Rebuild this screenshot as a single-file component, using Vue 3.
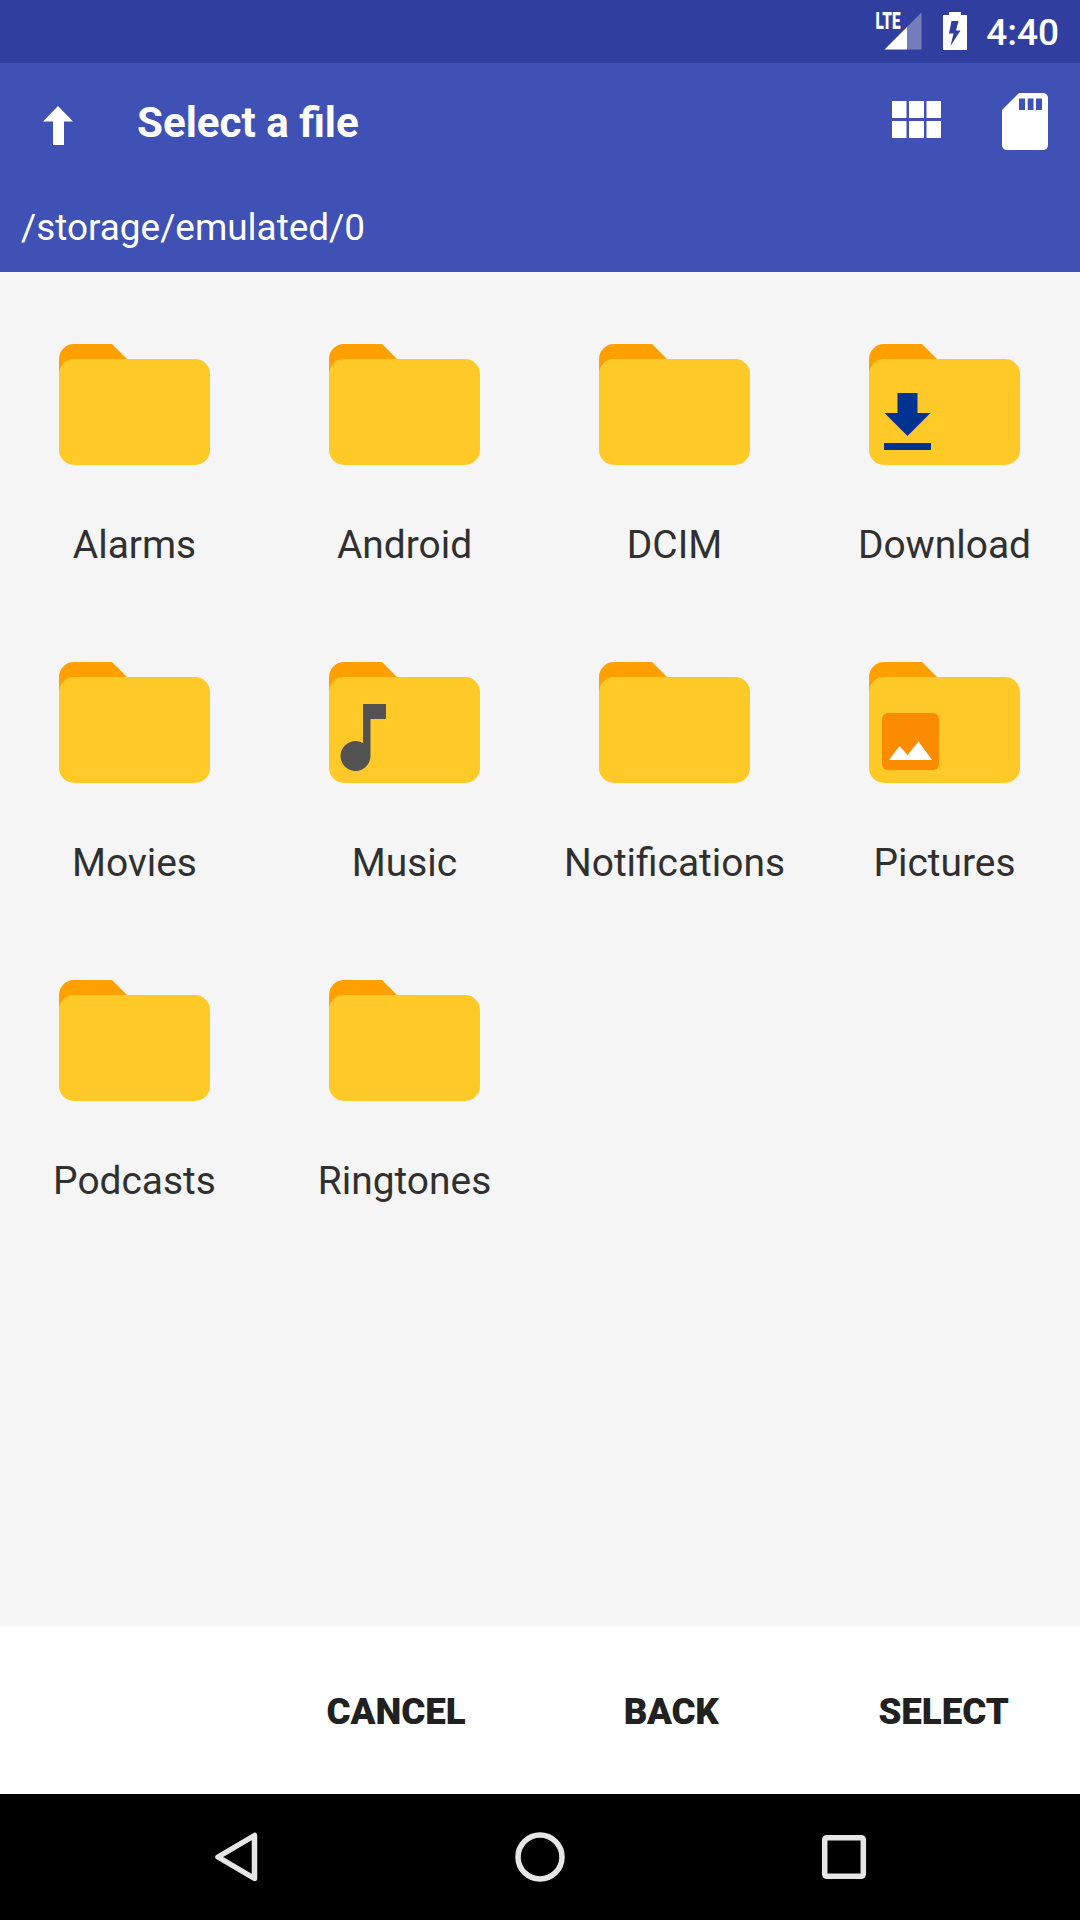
<script setup>
const folders = [
  { name: 'Alarms' },
  { name: 'Android' },
  { name: 'DCIM' },
  { name: 'Download', badge: 'download' },
  { name: 'Movies' },
  { name: 'Music', badge: 'music' },
  { name: 'Notifications' },
  { name: 'Pictures', badge: 'picture' },
  { name: 'Podcasts' },
  { name: 'Ringtones' },
]
</script>

<template>
  <div class="screen">
    <div class="status">
      <svg class="signal" width="50" height="44" viewBox="-4 -4 50 44">
        <path d="M45.500 2.500V39.500H30.500V17.500Z" fill="#757dbd" />
        <path d="M31 17V39.500H8.500Z" fill="#fff" />
        <text class="lte" x="-0.500" y="19" textLength="25" lengthAdjust="spacingAndGlyphs">LTE</text>
      </svg>
      <svg class="battery" width="24" height="38" viewBox="0 0 24 38">
        <path fill="#fff" fill-rule="evenodd" d="M6 0H18V3H24V38H0V3H6ZM8.500 9L6 21.500H10.500L7.500 34L17.500 18.500H13L15.500 9Z" />
      </svg>
      <span class="time">4:40</span>
    </div>

    <header class="appbar">
      <div class="toolbar">
        <svg class="up" width="30" height="39" viewBox="0 0 30 39">
          <path fill="#fff" d="M15 0L30 15.500H21V39H10V15.500H0Z" />
        </svg>
        <h1 class="title">Select a file</h1>
        <svg class="grid-icon" width="49" height="37" viewBox="0 0 49 37">
          <path fill="#fff" d="M0 0H14.500V17H0ZM17 0H32V17H17ZM34.500 0H49V17H34.500ZM0 20H14.500V37H0ZM17 20H32V37H17ZM34.500 20H49V37H34.500Z" />
        </svg>
        <svg class="sd" width="46" height="57" viewBox="0 0 46 57">
          <path fill="#fff" fill-rule="evenodd" d="M17 0H40.500Q46 0 46 5.500V51.500Q46 57 40.500 57H5.500Q0 57 0 51.500V17ZM17 5.500V17H23V5.500ZM25.700 5.500V17H31.500V5.500ZM34 5.500V17H40V5.500Z" />
        </svg>
      </div>
      <div class="path">/storage/emulated/0</div>
    </header>

    <main class="grid">
      <div v-for="f in folders" :key="f.name" class="cell">
        <svg class="folder" width="151" height="121" viewBox="0 0 151 121">
          <path fill="#ffa000" d="M15 0H53L69 16V30H0V15A15 15 0 0 1 15 0Z" />
          <rect y="15" width="151" height="106" rx="15" fill="#ffca28" />
          <g v-if="f.badge === 'download'" fill="#00328f">
            <path d="M28.500 49H48.500V69H61.500L38.500 92L15.500 69H28.500Z" />
            <rect x="15" y="99" width="47" height="7" />
          </g>
          <g v-else-if="f.badge === 'music'" fill="#525252">
            <path d="M34 42H57V57H41.500V94A15 15 0 1 1 34 81Z" />
          </g>
          <g v-else-if="f.badge === 'picture'">
            <rect x="13" y="51" width="57" height="57" rx="6" fill="#fb8c00" />
            <path fill="#fff" d="M20 98L30.500 84L38.500 93L49.500 79.500L63 98Z" />
          </g>
        </svg>
        <span class="label">{{ f.name }}</span>
      </div>
    </main>

    <footer class="actions">
      <button>CANCEL</button>
      <button>BACK</button>
      <button>SELECT</button>
    </footer>

    <nav class="nav">
      <svg width="50" height="50" viewBox="0 0 50 50">
        <path d="M43.500 3.500V46.500L7 25Z" />
      </svg>
      <svg width="50" height="50" viewBox="0 0 50 50">
        <circle cx="25" cy="25" r="22" />
      </svg>
      <svg width="50" height="50" viewBox="0 0 50 50">
        <rect x="5.700" y="5.700" width="38.600" height="38.600" rx="2" />
      </svg>
    </nav>
  </div>
</template>

<style>
body {
  margin: 0;
}
</style>

<style scoped>
.screen {
  width: 1080px;
  height: 1920px;
  display: flex;
  flex-direction: column;
  background: #f5f5f5;
  font-family: Roboto, "Liberation Sans", sans-serif;
  overflow: hidden;
}
svg {
  display: block;
  flex: none;
}
.status {
  height: 63px;
  background: #303f9f;
  display: flex;
  align-items: flex-start;
  justify-content: flex-end;
  padding-right: 21px;
  box-sizing: border-box;
  color: #fff;
}
.signal {
  margin-top: 6px;
  margin-right: 21px;
  overflow: visible;
}
.lte {
  font: 900 23px Roboto, sans-serif;
  fill: #fff;
}
.battery {
  margin-top: 12px;
  margin-right: 19px;
}
.time {
  font-size: 37px;
  font-weight: 500;
  line-height: 66px;
}
.appbar {
  height: 209px;
  background: #3f51b5;
  color: #fff;
}
.toolbar {
  height: 120px;
  display: flex;
  align-items: center;
  padding: 0 32px 0 43px;
}
.up {
  margin-top: 5px;
}
.title {
  margin: 0 auto 0 64px;
  font-size: 42.1px;
  font-weight: 700;
  line-height: 60px;
}
.grid-icon {
  margin-top: -7px;
  margin-right: 61px;
}
.sd {
  margin-top: -4px;
}
.path {
  padding-left: 21px;
  font-size: 36.9px;
  line-height: 90px;
}
.grid {
  flex: 1;
  display: grid;
  grid-template-columns: repeat(4, 270px);
  grid-auto-rows: 318px;
  align-content: start;
}
.cell {
  display: flex;
  flex-direction: column;
  align-items: center;
  padding-top: 72px;
  box-sizing: border-box;
}
.folder {
  margin-right: 1px;
}
.label {
  margin-top: 55px;
  margin-right: 1px;
  font-size: 38.9px;
  line-height: 50px;
  color: #303030;
}
.actions {
  height: 168px;
  background: #fff;
  display: flex;
  align-items: center;
  justify-content: flex-end;
  gap: 158px;
  padding: 3px 71px 0 0;
  box-sizing: border-box;
}
.actions button {
  border: 0;
  padding: 0;
  background: none;
  font: 900 36.7px/50px Roboto, sans-serif;
  color: #212121;
}
.actions button:nth-child(2) {
  margin-right: 2px;
  letter-spacing: -0.3px;
}
.nav {
  height: 126px;
  background: #000;
  display: flex;
  align-items: center;
  justify-content: center;
  gap: 254px;
}
.nav svg {
  fill: none;
  stroke: #e6e6e6;
  stroke-width: 5.500px;
  stroke-linejoin: round;
}
</style>
